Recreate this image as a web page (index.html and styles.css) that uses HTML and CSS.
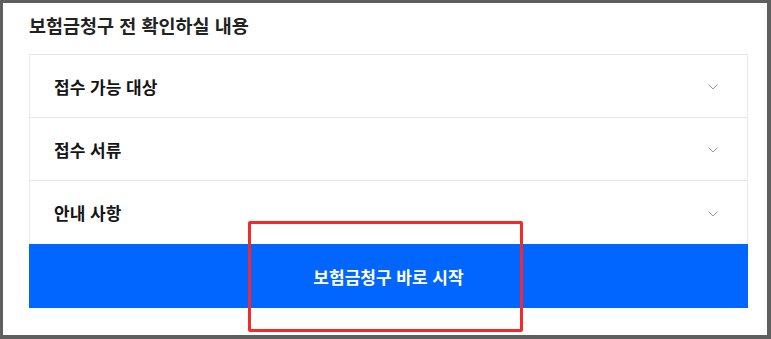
FILE: index.html
```html
<!DOCTYPE html>
<html lang="ko">
<head>
    <meta charset="UTF-8">
    <meta name="viewport" content="width=device-width, initial-scale=1.0">
    <title>보험금청구</title>
    <link rel="stylesheet" href="styles.css">
</head>
<body>
    <div class="frame">
        <h2 class="title">보험금청구 전 확인하실 내용</h2>

        <div class="accordion">
            <div class="acc-row">
                <span class="acc-label">접수 가능 대상</span>
                <svg class="chevron" width="10" height="6" viewBox="0 0 10 6"><path d="M0.5 0.5 L5 5 L9.5 0.5" fill="none" stroke="#9a9a9a" stroke-width="1"/></svg>
            </div>
            <div class="acc-row">
                <span class="acc-label">접수 서류</span>
                <svg class="chevron" width="10" height="6" viewBox="0 0 10 6"><path d="M0.5 0.5 L5 5 L9.5 0.5" fill="none" stroke="#9a9a9a" stroke-width="1"/></svg>
            </div>
            <div class="acc-row">
                <span class="acc-label">안내 사항</span>
                <svg class="chevron" width="10" height="6" viewBox="0 0 10 6"><path d="M0.5 0.5 L5 5 L9.5 0.5" fill="none" stroke="#9a9a9a" stroke-width="1"/></svg>
            </div>
            <button class="start-btn">보험금청구 바로 시작</button>
        </div>

        <!-- 강조 표시 -->
        <div class="highlight"></div>
    </div>
</body>
</html>
```

FILE: styles.css
```css
* {
    box-sizing: border-box;
}

body {
    margin: 0;
    background: #fff;
    font-family: "Noto Sans CJK KR", "Noto Sans", sans-serif;
    color: #1a1a1a;
}

.frame {
    position: relative;
    width: 771px;
    height: 339px;
    border-style: solid;
    border-color: #5f5f5f;
    border-width: 3px 4px 4px 3px;
    padding: 10px 19px 0 26px;
    background: #fff;
}

.title {
    margin: 0 0 17px;
    font-size: 18.5px;
    line-height: 24px;
    font-weight: 600;
    color: #222;
}

.accordion {
    border-left: 1px solid #ebebeb;
    border-right: 1px solid #ebebeb;
}

.acc-row {
    display: flex;
    align-items: center;
    justify-content: space-between;
    height: 63px;
    padding: 0 29px 0 24px;
    border-top: 1px solid #e6e6e6;
}

.acc-row:nth-child(3) {
    height: 64px;
}

.acc-label {
    font-size: 17px;
    font-weight: 700;
    color: #151515;
}

.chevron {
    display: block;
    margin-top: 2px;
}

.start-btn {
    display: block;
    width: calc(100% + 2px);
    margin: 0 -1px;
    height: 64px;
    border: none;
    background: #0066ff;
    color: #fff;
    font-family: inherit;
    font-size: 17px;
    font-weight: 600;
    cursor: pointer;
}

.highlight {
    position: absolute;
    left: 245px;
    top: 218px;
    width: 275px;
    height: 111px;
    border: 3px solid #f22a2a;
    border-radius: 2px;
}
```
